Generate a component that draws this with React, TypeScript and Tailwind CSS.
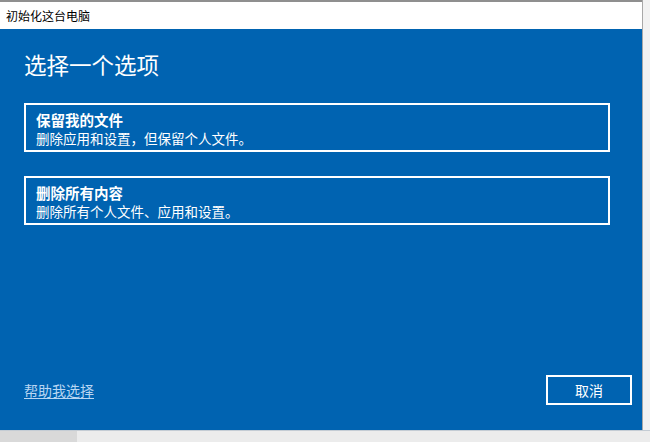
import React from "react";

const font = { fontFamily: '"Noto Sans CJK SC", "Noto Sans", sans-serif' };

function Option({ title, desc }: { title: string; desc: string }) {
  return (
    <div className="w-[586px] border-2 border-white pl-[10px] pt-[5px] pb-[2px] text-white">
      <div className="text-[14.5px] font-bold leading-[19px]">{title}</div>
      <div className="text-[13.5px] leading-[19px]">{desc}</div>
    </div>
  );
}

export default function App() {
  return (
    <div className="w-[650px] h-[442px] flex flex-col bg-[#ececec]" style={font}>
      <div className="flex h-[430px]">
        <div className="w-[643px] flex flex-col border-r border-[#a8a8a8]">
          <div className="h-[29px] bg-white border-t-2 border-[#8f8f8f] flex items-center pl-[6px] text-[12px] text-black">
            初始化这台电脑
          </div>
          <div className="flex-1 bg-[#0063b1] flex flex-col pl-[24px] pr-[10px] pt-[20px] pb-[25px]">
            <div className="text-white text-[22.5px] leading-[30px]">选择一个选项</div>
            <div className="mt-[24px] flex flex-col gap-[24px]">
              <Option title="保留我的文件" desc="删除应用和设置，但保留个人文件。" />
              <Option title="删除所有内容" desc="删除所有个人文件、应用和设置。" />
            </div>
            <div className="mt-auto flex items-center justify-between">
              <a className="text-[14px] text-[#b8d6f2] underline underline-offset-2 leading-[20px]">帮助我选择</a>
              <button className="w-[86px] h-[30px] border-2 border-white text-white text-[14px] flex items-center justify-center">
                取消
              </button>
            </div>
          </div>
        </div>
        <div className="flex-1 bg-[#f2f2f2]" />
      </div>
      <div className="flex-1 flex border-t border-[#c4ccd4]">
        <div className="w-[77px] bg-[#d9d9d9]" />
        <div className="flex-1 bg-[#ececec]" />
      </div>
    </div>
  );
}
